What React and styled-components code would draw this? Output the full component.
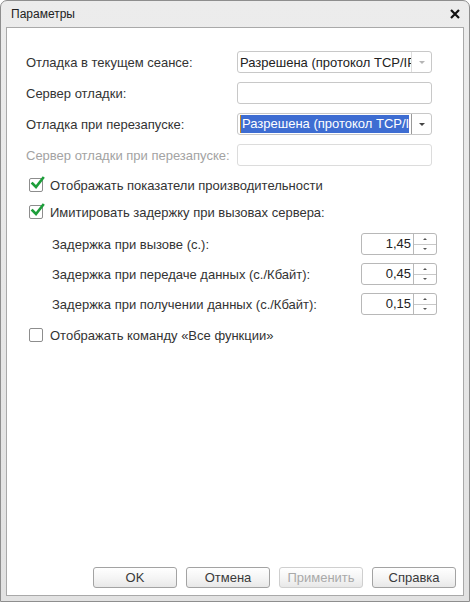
import React from "react";
import styled, { createGlobalStyle } from "styled-components";

const GlobalStyle = createGlobalStyle`
  html, body {
    margin: 0;
    padding: 0;
    background: #ffffff;
  }
  * {
    box-sizing: border-box;
  }
`;

const Window = styled.div`
  width: 470px;
  height: 602px;
  display: flex;
  flex-direction: column;
  border: 1px solid #8e8e8e;
  border-radius: 7px 7px 0 0;
  background: linear-gradient(180deg, #ececec 0%, #e2e2e2 100%);
  font-family: "Liberation Sans", Arial, sans-serif;
`;

const TitleBar = styled.div`
  height: 26px;
  flex-shrink: 0;
  display: flex;
  align-items: center;
  justify-content: space-between;
  padding: 0 9px 0 10px;
  font-size: 12px;
  color: #222;
`;

const CloseIcon = styled.svg`
  width: 10px;
  height: 10px;
`;

const Client = styled.div`
  flex: 1;
  margin: 0 5px 5px;
  background: #ffffff;
  border: 1px solid #a9a9a9;
  display: flex;
  flex-direction: column;
  padding: 23px 0 7px 19px;
`;

const Form = styled.div`
  flex: 1;
  display: flex;
  flex-direction: column;
`;

const FieldRow = styled.div`
  display: flex;
  align-items: center;
  height: 22px;
  margin-bottom: 9px;
`;

const Label = styled.span`
  width: 211px;
  font-size: 13px;
  color: ${(p) => (p.$disabled ? "#a3a3a3" : "#333333")};
  white-space: nowrap;
`;

const Box = styled.div`
  width: 195px;
  height: 22px;
  border: 1px solid ${(p) => (p.$disabled ? "#dcdcdc" : "#c8c8c8")};
  border-radius: 3px;
  background: #ffffff;
  display: flex;
  overflow: hidden;
`;

const BoxText = styled.div`
  flex: 1;
  display: flex;
  align-items: center;
  padding: 1px 2px;
  font-size: 13px;
  color: #222;
  white-space: nowrap;
  overflow: hidden;
`;

const Selected = styled.span`
  display: block;
  width: 100%;
  height: 100%;
  line-height: 18px;
  padding-left: 1px;
  background: #3e6dd2;
  color: #ffffff;
  border-left: 1px solid #c88a2a;
  overflow: hidden;
`;

const DropButton = styled.div`
  width: 20px;
  border-left: 1px solid ${(p) => (p.$active ? "#9a9a9a" : "#dddddd")};
  display: flex;
  align-items: center;
  justify-content: center;
`;

const Arrow = styled.span`
  width: 0;
  height: 0;
  border-left: 3px solid transparent;
  border-right: 3px solid transparent;
  border-top: 3px solid ${(p) => (p.$active ? "#444" : "#b5b5b5")};
`;

const CheckRow = styled.div`
  display: flex;
  align-items: center;
  gap: 7px;
  padding-left: 3px;
  height: 18px;
  margin-top: ${(p) => p.$top || 0}px;
  font-size: 13px;
  color: #333;
`;

const CheckBox = styled.div`
  position: relative;
  width: 14px;
  height: 14px;
  border: 1px solid #8d8d8d;
  border-radius: 2px;
  background: #ffffff;
`;

const CheckMark = styled.svg`
  position: absolute;
  left: 0px;
  top: -3px;
  width: 15px;
  height: 15px;
`;

const SpinList = styled.div`
  display: flex;
  flex-direction: column;
  gap: 8px;
  margin-top: 12px;
  padding-left: 26px;
`;

const SpinRow = styled.div`
  display: flex;
  align-items: center;
  justify-content: space-between;
  width: 385px;
  height: 22px;
  font-size: 13px;
  color: #333;
`;

const Spin = styled.div`
  width: 76px;
  height: 22px;
  border: 1px solid #b8b8b8;
  border-radius: 3px;
  display: flex;
  overflow: hidden;
`;

const SpinValue = styled.div`
  flex: 1;
  text-align: right;
  padding-right: 2px;
  line-height: 20px;
  font-size: 13px;
  color: #222;
`;

const SpinButtons = styled.div`
  width: 23px;
  border-left: 1px solid #b8b8b8;
  display: flex;
  flex-direction: column;
`;

const SpinHalf = styled.div`
  flex: 1;
  display: flex;
  align-items: center;
  justify-content: center;
  border-top: ${(p) => (p.$bottom ? "1px solid #c8c8c8" : "none")};
  &::after {
    content: "";
    width: 0;
    height: 0;
    border-left: 2px solid transparent;
    border-right: 2px solid transparent;
    ${(p) =>
      p.$bottom
        ? "border-top: 2px solid #555;"
        : "border-bottom: 2px solid #555;"}
  }
`;

const ButtonBar = styled.div`
  display: flex;
  justify-content: flex-end;
  gap: 9px;
  padding-right: 7px;
`;

const Button = styled.button`
  width: 84px;
  height: 21px;
  padding: 0;
  border: 1px solid ${(p) => (p.disabled ? "#cfcfcf" : "#a3a3a3")};
  border-radius: 3px;
  background: linear-gradient(180deg, #ffffff 0%, #f4f4f4 55%, #e8e8e8 100%);
  font-family: "Liberation Sans", Arial, sans-serif;
  font-size: 13px;
  font-weight: 400;
  color: ${(p) => (p.disabled ? "#a9a9a9" : "#3a3a3a")};
`;

const Check = ({ checked }) => (
  <CheckBox>
    {checked && (
      <CheckMark viewBox="0 0 15 15">
        <path
          d="M2.5 7.5 L6 11 L13 2"
          fill="none"
          stroke="#1d9e3a"
          strokeWidth="2.6"
          strokeLinecap="square"
        />
      </CheckMark>
    )}
  </CheckBox>
);

const Dropdown = ({ value, active }) => (
  <Box>
    <BoxText>{active ? <Selected>{value}</Selected> : value}</BoxText>
    <DropButton $active={active}>
      <Arrow $active={active} />
    </DropButton>
  </Box>
);

const delays = [
  { label: "Задержка при вызове (с.):", value: "1,45" },
  { label: "Задержка при передаче данных (с./Кбайт):", value: "0,45" },
  { label: "Задержка при получении данных (с./Кбайт):", value: "0,15" },
];

const App = () => {
  return (
    <>
      <GlobalStyle />
      <Window>
        <TitleBar>
          <span>Параметры</span>
          <CloseIcon viewBox="0 0 10 10">
            <path d="M1 1 L9 9 M9 1 L1 9" stroke="#111" strokeWidth="2.2" />
          </CloseIcon>
        </TitleBar>
        <Client>
          <Form>
            <FieldRow>
              <Label>Отладка в текущем сеансе:</Label>
              <Dropdown value="Разрешена (протокол TCP/IP)" />
            </FieldRow>
            <FieldRow>
              <Label>Сервер отладки:</Label>
              <Box />
            </FieldRow>
            <FieldRow>
              <Label>Отладка при перезапуске:</Label>
              <Dropdown value="Разрешена (протокол TCP/IP)" active />
            </FieldRow>
            <FieldRow>
              <Label $disabled>Сервер отладки при перезапуске:</Label>
              <Box $disabled />
            </FieldRow>

            <CheckRow $top={1}>
              <Check checked />
              Отображать показатели производительности
            </CheckRow>
            <CheckRow $top={9}>
              <Check checked />
              Имитировать задержку при вызовах сервера:
            </CheckRow>

            <SpinList>
              {delays.map((d) => (
                <SpinRow key={d.label}>
                  <span>{d.label}</span>
                  <Spin>
                    <SpinValue>{d.value}</SpinValue>
                    <SpinButtons>
                      <SpinHalf />
                      <SpinHalf $bottom />
                    </SpinButtons>
                  </Spin>
                </SpinRow>
              ))}
            </SpinList>

            <CheckRow $top={11}>
              <Check />
              Отображать команду «Все функции»
            </CheckRow>
          </Form>

          <ButtonBar>
            <Button>OK</Button>
            <Button>Отмена</Button>
            <Button disabled>Применить</Button>
            <Button>Справка</Button>
          </ButtonBar>
        </Client>
      </Window>
    </>
  );
};

export default App;
